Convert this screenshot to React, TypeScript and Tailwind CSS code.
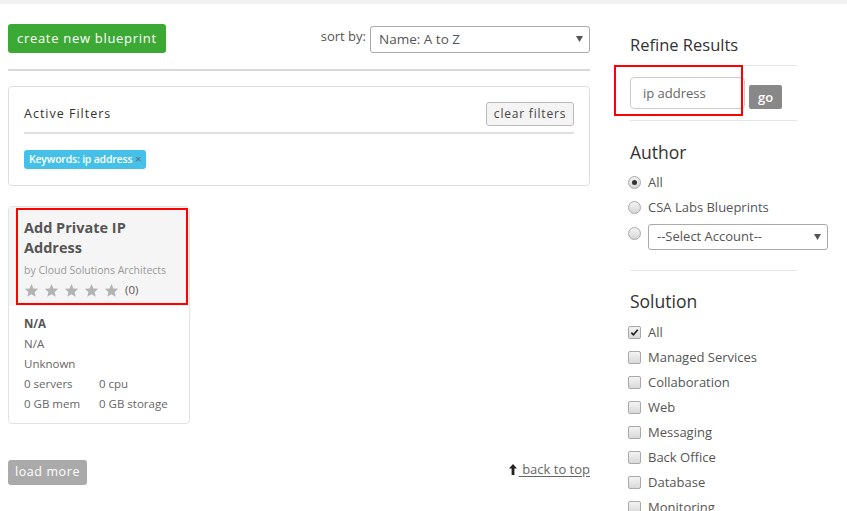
import React from "react";

const font = { fontFamily: '"Open Sans", "Noto Sans", sans-serif' };

function Star() {
  return (
    <svg width="15" height="15" viewBox="0 0 24 24" className="shrink-0">
      <path
        d="M12 1.5l3.1 7.1 7.7.7-5.8 5.1 1.7 7.6L12 18.1 5.3 22l1.7-7.6L1.2 9.3l7.7-.7z"
        fill="#b3b3b3"
      />
    </svg>
  );
}

function Radio({ checked }: { checked?: boolean }) {
  return (
    <span className="w-[13px] h-[13px] rounded-full border border-[#a9a9a9] bg-gradient-to-b from-[#f4f4f4] to-[#d6d6d6] flex items-center justify-center shrink-0">
      {checked && <span className="w-[5px] h-[5px] rounded-full bg-[#333]" />}
    </span>
  );
}

function Check({ checked }: { checked?: boolean }) {
  return (
    <span className="w-[13px] h-[13px] rounded-[2px] border border-[#a9a9a9] bg-gradient-to-b from-[#f4f4f4] to-[#d9d9d9] flex items-center justify-center shrink-0">
      {checked && (
        <svg width="9" height="9" viewBox="0 0 10 10">
          <path d="M1.5 5.2l2.3 2.4L8.6 2" stroke="#222" strokeWidth="1.8" fill="none" />
        </svg>
      )}
    </span>
  );
}

function Caret() {
  return (
    <svg width="7" height="6" viewBox="0 0 7 6">
      <path d="M0 0h7L3.5 6z" fill="#555" />
    </svg>
  );
}

export default function App() {
  const solutions = [
    "All",
    "Managed Services",
    "Collaboration",
    "Web",
    "Messaging",
    "Back Office",
    "Database",
    "Monitoring",
  ];
  return (
    <div className="w-[847px] h-[511px] overflow-hidden bg-white" style={font}>
      <div className="h-[4px] bg-[#f1f1f1]" />
      <div className="flex pl-[8px]">
        {/* Left column */}
        <div className="w-[582px] flex flex-col">
          <div className="mt-[20px] flex items-center justify-between">
            <button className="h-[29px] px-[9px] bg-[#3ca934] text-white text-[13px] tracking-[0.7px] rounded-[3px] leading-none">
              create new blueprint
            </button>
            <div className="flex items-start">
              <span className="text-[13px] text-[#555] mr-[4px] mt-[2px]">sort by:</span>
              <div className="w-[220px] h-[27px] border border-[#aaa] rounded-[3px] flex items-center justify-between pl-[8px] pr-[6px] mt-[1px]">
                <span className="text-[13.5px] text-[#555]">Name: A to Z</span>
                <Caret />
              </div>
            </div>
          </div>
          <div className="mt-[16px] h-[2px] bg-[#d9d9d9]" />
          <div className="mt-[15px] border border-[#dedede] rounded-[4px] px-[15px] pt-[15px] pb-[16px]">
            <div className="flex items-center justify-between h-[24px]">
              <span className="text-[12.5px] text-[#333] tracking-[1px]">Active Filters</span>
              <button className="h-[24px] w-[88px] border border-[#bbb] bg-[#f4f4f4] rounded-[3px] text-[12px] text-[#444] tracking-[0.8px] leading-none">
                clear filters
              </button>
            </div>
            <div className="mt-[6px] h-[2px] bg-[#e0e0e0]" />
            <div className="mt-[16px] flex">
              <span className="h-[19px] px-[5px] bg-[#45c0e8] rounded-[3px] text-white text-[10.5px] font-semibold flex items-center tracking-[-0.2px]">
                Keywords: ip address <span className="ml-[3px] text-[#666] font-normal text-[11px]">×</span>
              </span>
            </div>
          </div>
          <div className="mt-[20px] w-[182px] border border-[#e3e3e3] rounded-[4px] relative">
            <div className="bg-[#f5f5f5] pl-[15px] pr-[8px] pt-[11px] pb-[7px]">
              <div className="text-[14.5px] font-bold text-[#555] leading-[20px]">Add Private IP<br />Address</div>
              <div className="mt-[4px] text-[10.5px] text-[#999] leading-[16px]">by Cloud Solutions Architects</div>
              <div className="mt-[3px] flex items-center gap-[5px] h-[18px]">
                <Star /><Star /><Star /><Star /><Star />
                <span className="text-[11.5px] text-[#555] ml-[1px]">(0)</span>
              </div>
            </div>
            <div className="pl-[15px] pt-[8px] pb-[9px] text-[11.5px] text-[#666] leading-[20px]">
              <div className="font-bold text-[#555]">N/A</div>
              <div>N/A</div>
              <div>Unknown</div>
              <div className="flex"><span className="w-[75px]">0 servers</span><span>0 cpu</span></div>
              <div className="flex"><span className="w-[75px]">0 GB mem</span><span>0 GB storage</span></div>
            </div>
            <div className="absolute left-[7px] top-[1px] w-[172px] h-[97px] border-2 border-[#ff0000] pointer-events-none" />
          </div>
          <div className="mt-[36px] flex items-center justify-between">
            <button className="h-[25px] w-[79px] bg-[#aaa] text-white text-[12.5px] tracking-[0.6px] rounded-[3px] leading-none">
              load more
            </button>
            <a className="flex items-center text-[13px] text-[#666] mt-[-6px]">
              <svg width="8" height="11" viewBox="0 0 8 11" className="mr-[2px]">
                <path d="M4 0L8 4.5H5.4V11H2.6V4.5H0z" fill="#222" />
              </svg>
              <span className="underline underline-offset-2">{"\u00a0back to top"}</span>
            </a>
          </div>
        </div>

        {/* Right column */}
        <div className="ml-[40px] w-[167px] flex flex-col">
          <div className="mt-[30px] text-[16.5px] text-[#333] leading-[22px]">Refine Results</div>
          <div className="mt-[9px] h-[1px] bg-[#e6e6e6]" />
          <div className="mt-[11px] flex items-end relative">
            <div className="w-[115px] h-[32px] border border-[#ccc] rounded-[4px] flex items-center pl-[12px] pt-[2px] text-[13px] text-[#666]">
              ip address
            </div>
            <button className="ml-[4px] w-[33px] h-[24px] bg-[#888] text-white text-[13px] font-semibold rounded-[2px] leading-none">
              go
            </button>
            <div className="absolute left-[-16px] top-[-12px] w-[129px] h-[51px] border-2 border-[#ff0000] pointer-events-none" />
          </div>
          <div className="mt-[11px] h-[1px] bg-[#e6e6e6]" />
          <div className="mt-[19px] text-[17.5px] text-[#333] leading-[24px]">Author</div>
          <div className="mt-[6px] flex flex-col ml-[-2px] text-[13px] text-[#555]">
            <label className="flex items-center h-[25px]"><Radio checked /><span className="ml-[7px]">All</span></label>
            <label className="flex items-center h-[25px]"><Radio /><span className="ml-[7px]">CSA Labs Blueprints</span></label>
            <label className="flex items-start pt-[4px]">
              <span className="mt-[3px]"><Radio /></span>
              <div className="ml-[7px] w-[180px] h-[26px] border border-[#aaa] rounded-[3px] flex items-center justify-between pl-[8px] pr-[6px] shrink-0">
                <span className="text-[13px] text-[#555]">--Select Account--</span>
                <Caret />
              </div>
            </label>
          </div>
          <div className="mt-[20px] h-[1px] bg-[#e6e6e6]" />
          <div className="mt-[18px] text-[17.5px] text-[#333] leading-[24px]">Solution</div>
          <div className="mt-[7px] flex flex-col ml-[-2px] text-[13px] text-[#555]">
            {solutions.map((s, i) => (
              <label key={s} className="flex items-center h-[25px]">
                <Check checked={i === 0} />
                <span className="ml-[7px]">{s}</span>
              </label>
            ))}
          </div>
        </div>
      </div>
    </div>
  );
}
